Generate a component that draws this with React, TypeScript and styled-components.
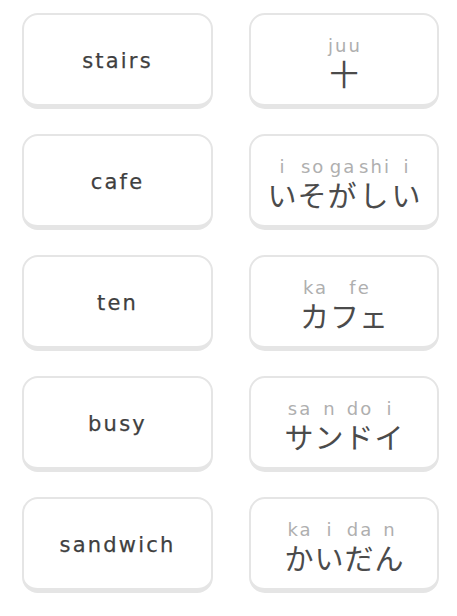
import React from "react";
import styled, { createGlobalStyle } from "styled-components";

const GlobalStyle = createGlobalStyle`
  html, body {
    margin: 0;
    padding: 0;
    background: #ffffff;
  }
  * { box-sizing: border-box; }
`;

const Board = styled.div`
  display: grid;
  grid-template-columns: 191px 190px;
  column-gap: 36px;
  row-gap: 25px;
  padding: 13px 0 0 22px;
  font-family: "DejaVu Sans", "Noto Sans CJK JP", sans-serif;
`;

const Card = styled.div<{ $tall?: boolean }>`
  height: 96px;
  border: 2px solid #e5e5e5;
  border-bottom-width: 5px;
  border-radius: 16px;
  background: #ffffff;
  display: flex;
  flex-direction: column;
  align-items: center;
  justify-content: center;
  padding-top: ${(p) => (p.$tall ? "5px" : "2px")};
`;

const Word = styled.span`
  font-size: 21px;
  line-height: 28px;
  letter-spacing: 2.2px;
  color: #3f3f3f;
  -webkit-text-stroke: 0.25px #3f3f3f;
`;

const Phrase = styled.div`
  display: flex;
  flex-direction: row;
  align-items: flex-end;
`;

const Unit = styled.div`
  display: flex;
  flex-direction: column;
  align-items: center;
`;

const Reading = styled.span`
  font-family: "DejaVu Sans", sans-serif;
  font-size: 18px;
  line-height: 21px;
  letter-spacing: 2px;
  padding-left: 2px;
  color: #afafaf;
  white-space: pre;
`;

const Kana = styled.span`
  font-family: "Noto Sans CJK JP", sans-serif;
  font-size: 29px;
  line-height: 34px;
  color: #4b4b4b;
  padding: 0 0.5px;
`;

type Pair = [string, string];

const rows: { en: string; jp: Pair[] }[] = [
  { en: "stairs", jp: [["juu", "十"]] },
  {
    en: "cafe",
    jp: [
      ["i", "い"],
      ["so", "そ"],
      ["ga", "が"],
      ["shi", "し"],
      ["i", "い"],
    ],
  },
  {
    en: "ten",
    jp: [
      ["ka", "カ"],
      ["fe", "フェ"],
    ],
  },
  {
    en: "busy",
    jp: [
      ["sa", "サ"],
      ["n", "ン"],
      ["do", "ド"],
      ["i", "イ"],
    ],
  },
  {
    en: "sandwich",
    jp: [
      ["ka", "か"],
      ["i", "い"],
      ["da", "だ"],
      ["n", "ん"],
    ],
  },
];

export default function App() {
  return (
    <>
      <GlobalStyle />
      <Board>
        {rows.map((r) => (
          <React.Fragment key={r.en}>
            <Card>
              <Word>{r.en}</Word>
            </Card>
            <Card $tall>
              <Phrase>
                {r.jp.map(([rd, k], i) => (
                  <Unit key={i}>
                    <Reading>{rd}</Reading>
                    <Kana>{k}</Kana>
                  </Unit>
                ))}
              </Phrase>
            </Card>
          </React.Fragment>
        ))}
      </Board>
    </>
  );
}
